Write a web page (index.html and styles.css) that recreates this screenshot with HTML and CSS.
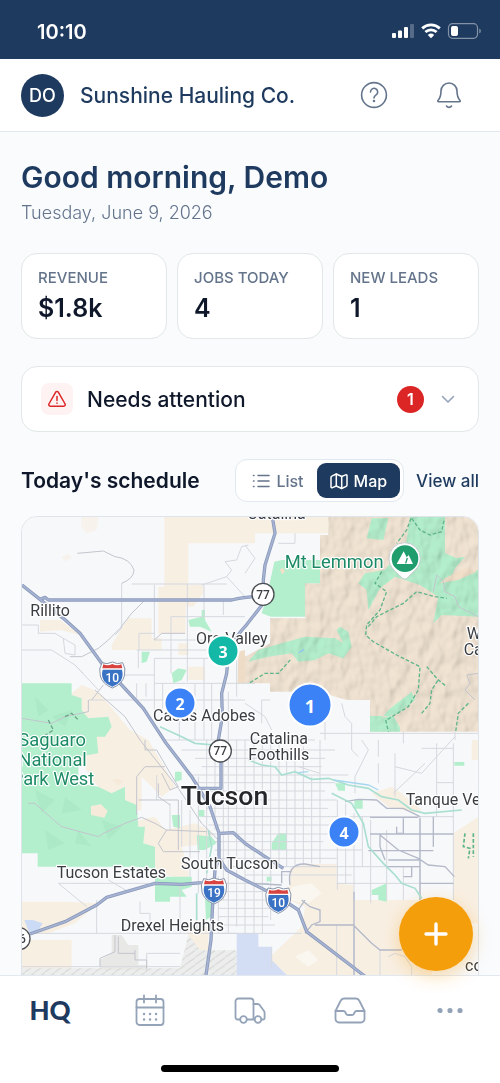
FILE: index.html
```html
<!DOCTYPE html>
<html lang="en">
<head>
    <meta charset="UTF-8">
    <meta name="viewport" content="width=device-width, initial-scale=1.0">
    <title>Sunshine Hauling Co.</title>
    <link rel="stylesheet" href="styles.css">
</head>
<body>
    <div class="status-bar">
        <span class="time">10:10</span>
        <svg class="status-icons" width="90" height="18" viewBox="0 0 90 18" aria-hidden="true">
            <g fill="#fff">
                <rect x="1" y="10" width="4" height="5" rx="1"/>
                <rect x="7" y="7.5" width="4" height="7.5" rx="1"/>
                <rect x="13" y="4" width="4" height="11" rx="1"/>
                <rect x="19" y="1" width="4" height="14" rx="1" opacity=".25"/>
                <rect x="60" y="3" width="7" height="10" rx="2"/>
            </g>
            <g fill="none" stroke="#fff" stroke-width="2.8">
                <path d="M31.2 5.4a13 13 0 0 1 17.6 0"/>
                <path d="M34.4 9a8.2 8.2 0 0 1 11.2 0"/>
            </g>
            <path d="M40 15.200l-3.200-3.300a4.700 4.700 0 0 1 6.400 0z" fill="#fff"/>
            <rect x="57.500" y=".7" width="29" height="14.600" rx="4" fill="none" stroke="#fff" stroke-opacity=".45" stroke-width="1.200"/>
            <path d="M88.300 5.500v5c2-.8 2-4.200 0-5z" fill="#fff" opacity=".45"/>
        </svg>
    </div>

    <header class="header">
        <div class="avatar">DO</div>
        <div class="company">Sunshine Hauling Co.</div>
        <button class="icon-btn" aria-label="Help">
            <svg width="28" height="28" viewBox="0 0 28 28">
                <circle cx="14" cy="14" r="12.400"/>
                <path d="M10.500 11a3.600 3.600 0 1 1 5.600 2.900c-1.400.9-2.100 1.500-2.100 3"/>
                <circle cx="14" cy="20" r=".5"/>
            </svg>
        </button>
        <button class="icon-btn" aria-label="Notifications">
            <svg width="28" height="28" viewBox="0 0 28 28">
                <path d="M3 19.500c2.400-2.800 3-5.600 3-9.500a8 8 0 0 1 16 0c0 3.900.6 6.700 3 9.500.5.700.2 1.200-.6 1.200H3.600c-.8 0-1.100-.5-.6-1.200z"/>
                <path d="M11.500 25c1.200 1.800 3.800 1.800 5 0"/>
            </svg>
        </button>
    </header>

    <main class="content">
        <h1>Good morning, Demo</h1>
        <p class="date">Tuesday, June 9, 2026</p>

        <div class="stats">
            <div class="card stat">
                <span class="stat-label">REVENUE</span>
                <span class="stat-value">$1.8k</span>
            </div>
            <div class="card stat">
                <span class="stat-label">JOBS TODAY</span>
                <span class="stat-value">4</span>
            </div>
            <div class="card stat">
                <span class="stat-label">NEW LEADS</span>
                <span class="stat-value">1</span>
            </div>
        </div>

        <button class="card attention">
            <span class="alert-icon">
                <svg width="20" height="20" viewBox="0 0 20 20">
                    <path d="M8.700 3.200L1.900 15a1.500 1.500 0 0 0 1.300 2.200h13.600a1.500 1.500 0 0 0 1.300-2.200L11.300 3.200a1.500 1.500 0 0 0-2.600 0z"/>
                    <path d="M10 7.500v4"/>
                    <path d="M10 14v.2"/>
                </svg>
            </span>
            <span class="attention-title">Needs attention</span>
            <span class="count">1</span>
            <svg class="chevron" width="16" height="16" viewBox="0 0 16 16">
                <path d="M2.500 5.500L8 11l5.500-5.500"/>
            </svg>
        </button>

        <div class="schedule-head">
            <h2>Today's schedule</h2>
            <div class="toggle">
                <button>
                    <svg width="18" height="18" viewBox="0 0 18 18">
                        <path d="M6 3.500h11M6 9h11M6 14.500h11"/>
                        <path d="M1.500 3.500h.5M1.500 9h.5M1.500 14.500h.5"/>
                    </svg>
                    List
                </button>
                <button class="active">
                    <svg width="18" height="18" viewBox="0 0 18 18">
                        <path d="M6.300 2L1.800 4.200c-.5.200-.8.600-.8 1.200v9.300c0 .8.700 1.200 1.400.9L6.300 14l5.400 2.500 4.500-2.200c.5-.2.800-.6.800-1.200V3.800c0-.8-.7-1.200-1.400-.9l-3.900 1.600z"/>
                        <path d="M6.300 2v12M11.700 4.500v12"/>
                    </svg>
                    Map
                </button>
            </div>
            <a class="view-all" href="#">View all</a>
        </div>

        <div class="map">
            <svg class="map-canvas" viewBox="21 21 1368 1560" preserveAspectRatio="xMidYMin slice">
                <defs>
                    <g id="interstate">
                        <path d="M-31-36Q-16-29 0-38Q16-29 31-36Q42-18 36 4Q30 28 0 40Q-30 28-36 4Q-42-18-31-36z" fill="#fff" stroke="#8793a8" stroke-width="3"/>
                        <path d="M-29-15H29Q34 3 25 19Q16 31 0 36Q-16 31-25 19Q-34 3-29-15z" fill="#3a72c4"/>
                        <path d="M-27-31Q-14-25 0-32Q14-25 27-31L30-19H-30z" fill="#d8433f"/>
                    </g>
                    <pattern id="hatch" width="30" height="22" patternUnits="userSpaceOnUse">
                        <path d="M0 22L30 2" stroke="#d9dad6" stroke-width="4"/>
                    </pattern>
                    <path id="range" d="M940 20H1400V665H1065V570H995L910 545H765V520H690V440L765 400V325H870V220H915V75H940z"/>
                    <clipPath id="range-clip">
                        <use href="#range"/>
                    </clipPath>
                    <filter id="relief" x="0" y="0" width="100%" height="100%">
                        <feTurbulence type="fractalNoise" baseFrequency="0.03 0.02" numOctaves="2" seed="7"/>
                        <feColorMatrix values="0 0 0 0 0  0 0 0 0 0  0 0 0 0 0  1 0 0 0 0"/>
                        <feDiffuseLighting surfaceScale="14" lighting-color="#fff">
                            <feDistantLight azimuth="225" elevation="50"/>
                        </feDiffuseLighting>
                    </filter>
                </defs>

                <rect x="0" y="0" width="1420" height="1620" fill="#f7f8fa"/>

                <!-- desert -->
                <g fill="#f8efe3">
                    <path d="M448 20H940V70H720V100H520V220L512 300V372H430V230H448z"/>
                    <path d="M200 20H250L245 60L215 70L198 50zM140 140l20-8 10 12-20 10z" opacity=".6"/>
                    <path d="M320 355L340 325H410V385H440V420H290V405z"/>
                    <path d="M490 400h30v35h-30zM520 470h50v40h-50zM75 330h60l60 45-60-15-60 5zM515 225h50v25l-30 40h-20z"/>
                    <path d="M170 550L200 525L250 545L345 660L400 690L430 740L480 830L440 860L380 800V900L330 910L240 820L190 740V690z"/>
                    <path d="M215 885H270V925H225zM330 940L420 920L450 960L540 940L590 965V1000L500 1010L520 1070V1110L430 1090L380 980z"/>
                    <path d="M21 1175H150L250 1180L180 1240L100 1270H21z"/>
                    <path d="M21 1290H170V1385H21zM520 1250h60v70h-60z"/>
                    <path d="M825 1075L870 1062H965V1120L1015 1125V1170H1250V1400H1390V1581H850L765 1500V1340L860 1250L870 1190L820 1170z"/>
                    <path d="M1315 970L1390 920V1240H1315zM1070 850l60-20 30 20 60 50-20 10-80-20z"/>
                    <path d="M1370 690h20v60h-20z"/>
                </g>
                <path d="M830 1130l60-10 30 30-40 30-60-10zM840 1340l40-20 30 30-30 20z" fill="#faf7f1"/>

                <!-- Catalina mountains -->
                <use href="#range" fill="#f1e4d3"/>
                <g fill="#b4efcd">
                    <path d="M778 155L800 150H915V220H870V320H768L740 310L755 260z"/>
                    <path d="M1070 25h50l-15 65-50-5zM1185 21H1290V130L1325 145L1350 140L1320 175L1305 210L1390 180V320L1280 315L1255 340L1270 260L1215 225L1140 200L1095 235L1060 300L1055 240L1030 220L1050 190L1110 180L1175 90z"/>
                    <path d="M700 455L730 420L800 400L870 380L960 385L985 400L965 360L975 350L1000 365L1010 410L985 445L940 430L900 450L850 455L830 430L760 440z"/>
                    <path d="M1190 545L1120 600L1100 625L1150 610L1200 570zM1065 618h70l20 35v12h-90z"/>
                    <path d="M21 520H170V555L200 565V600L220 625L280 620L290 650L270 680H245L250 730L190 740V820L250 830L290 850L330 830V870L365 885L370 950L390 950L385 1000L420 1010V1075L365 1070H68V1030H21z"/>
                    <path d="M520 330L560 320V300H570V330L590 365L555 350H525zM380 425h25l-10 30-15 5zM470 490l20-15 25 5-15 30-25 10z"/>
                    <path d="M420 1100H530V1130L500 1140L515 1160H465V1175H420zM545 975L590 980L605 1000L570 1020H548zM470 915h25v40l-20-5zM550 900h18v20h-18zM480 785h20v25l-20 5zM570 1160h18v60l-15 10z"/>
                    <path d="M770 1000l20-30h25v50h-45zM960 820h30v22h-20zM1018 868h25v28h-25zM1070 1140l45-20v55l-25-5v-15h-20zM1318 756h30v11h-30zM755 1100h15v14h-15z"/>
                </g>
                <path d="M228 888l30-5 20 20-10 20-40-8zM290 810l20-5 15 10-15 12z" fill="#f6eadb"/>
                <path d="M1290 205L1360 170L1385 185L1330 210L1275 220zM795 178l10-4 5 12-10 6z" fill="#f1dfca"/>
                <path d="M670 425L690 420V520H668z" fill="#efdcc7"/>

                <!-- relief -->
                <g class="relief" clip-path="url(#range-clip)">
                    <rect x="690" y="20" width="700" height="650" filter="url(#relief)"/>
                </g>
                <g fill="#7cc9a0" opacity=".14">
                    <path d="M60 560l40 40-30 20zM110 620l60-20-20 50zM60 840l60 30-40 40zM150 860l50 40-60 10zM260 930l60 20-40 40zM190 960l40 50-50-10zM90 960l60 40-50 20z"/>
                </g>
                <path d="M852 428l15-10" stroke="#8ec5f2" stroke-width="4"/>

                <!-- airfields and water -->
                <path d="M21 1375H495L520 1275L555 1320H665V1581H21z" fill="#eceded"/>
                <path d="M290 1275h30l20 30h30v60h25v15H255v-30l35-20z" fill="#e8e8e6"/>
                <path d="M21 1375H495L520 1275L555 1320H665V1581H21z" fill="url(#hatch)"/>
                <path d="M665 1270H730V1310H770V1350L815 1395V1581H665z" fill="#d3def5"/>
                <path d="M28 1230h25l30 10-15 25-25 5z" fill="#cbdaf5"/>

                <!-- streets -->
                <g fill="none" stroke="#d5d8de" stroke-width="3">
                    <path d="M320 220V355L300 375M350 222H635M418 225V390M517 222V515M372 420V370H418M468 320H600M468 320V490M418 390H620M365 420H665M418 445H620M420 520H720M220 570H690M370 420V475M315 495H420M365 520V565M393 520V560M418 445V600M443 520V595M567 445V690M590 520V690M540 520V690M493 570V690M470 570V620M640 545V690M665 420V560M567 225V320M625 270V315M600 320H690"/>
                    <path d="M21 345H70V370H120L145 385M21 420H110L180 465L205 490M145 385l35 20v30l-30-5zM180 465L250 540M560 225L635 200L650 180L630 155L665 150L680 110L700 105M635 200L690 260M690 105l30 40-30 45"/>
                    <path d="M445 690H900M500 720H960M540 745H930M560 770H920M520 795H1000M540 818H960M575 843H930M575 870H965M575 895H940M560 920H1315M580 945H965M580 972H940M600 995H925M600 1020H1040M620 1045H965M640 1070H1215M690 1095H1010M965 1120H1215M620 1120H760M610 1145H750M610 1170H750M610 1195H770M610 1220H760M610 1245H780M610 1270H860"/>
                    <path d="M500 870V1010M525 900V1100M550 800V1150M575 690V1130M600 690V960M625 690V1170M640 690V1270M665 690V1250M690 690V1270M717 690V1270M742 700V1270M767 700V1230M792 700V1070M815 730V1070M840 720V1065M865 710V1065M890 800V1060M915 690V1060M967 870V1140M992 880V1120M1017 910V1170M1042 920V1070M1067 930V1180M1115 960V1170M1140 730V860M1215 920V1170M1265 700V920M1315 700V1170M1165 1070V1170M1090 760V820"/>
                    <path d="M930 570V690M980 580L990 620L1010 640V720L1030 740M690 580l60 40 20 40M915 670H1390M1140 770L1220 790L1265 740L1320 680M1135 850L1230 760M1165 665V700M1320 665V690M765 570H740V640M1040 690L1060 720L1020 800V850M915 790L850 770M1090 690V740M1265 818H1315M790 100h50v-30M1220 715H1315"/>
                    <path d="M130 1120L215 1190M130 1120H400M245 1170V1270M21 1270H665M375 1175V1210H405V1250M495 1120V1270M21 1370H495M280 1110L340 1145M465 880V960M425 795V870M610 1100V1270M545 1195V1270M395 1380V1330H495M770 1310V1370M765 1400H870M965 1245V1400M1017 1250V1400M1095 1320V1400M1120 1340l20-10 30 10 20 30v30M1290 1350l40-50 30-10"/>
                </g>
                <g fill="none" stroke="#c2c5cd" stroke-width="3">
                    <path d="M187 130L265 123L300 140Q345 145 357 180Q357 205 320 220M385 275L350 310L315 355L280 390L250 415L200 440L165 440M470 270H520M418 390L440 370H510M230 570L265 525M220 570V605L150 620L110 640L21 625M240 540L330 620L375 690L490 835L560 940L610 990"/>
                    <path d="M40 880L60 880L110 925L140 950L250 980L265 970L330 940L380 922L420 940L455 960L575 965M365 915V800L390 770H450M430 820V860L465 885M455 960L430 1000L445 1025H555M370 870H490V1020M390 690V720H425L460 780L490 830L465 840L440 790"/>
                    <path d="M1255 245L1265 195L1285 215L1290 245L1320 260L1330 290L1370 310L1390 320M1390 490L1355 495L1365 520L1350 540L1380 570M255 1370V1345L300 1325V1275M360 1320V1350H395V1375M310 1280V1330H360"/>
                    <path d="M100 630l15 30-30 20M150 620l20-10 20 20" stroke="#6ba588" stroke-width="4" stroke-dasharray="12 6"/>
                </g>
                <g fill="none" stroke="#b3b9c9" stroke-width="4">
                    <path d="M990 875L1030 868L1085 870L1115 895H1165L1215 920M1065 922H1210M1215 925V1170M1165 925V970H1145V950M1065 972H1315M1095 970V1010L1110 1050M1095 975L1150 1020L1210 1045L1240 1065L1290 1070L1318 1100M1120 1050H1215M1115 1070H1215M1060 1022H1255M1255 920V1010M1190 1070V1100H1165"/>
                    <path d="M1017 1145V1400M860 1170L885 1190L915 1200V1235L890 1245L870 1270M900 1245H1015L1035 1265L1070 1300L1095 1320H1160M850 1200L870 1170M1215 1120H1315M825 1125Q815 1060 870 1062L915 1070M800 1120V1085H830M710 1120L800 1125"/>
                </g>
                <g fill="none" stroke="#a9dfd0" stroke-width="5">
                    <path d="M435 650L500 680L540 700L600 705M700 750L740 765L780 770L800 795L840 785L890 808L940 805L1000 825L1060 835L1100 860L1150 870L1190 900L1230 910L1340 900M950 850L1010 880L1045 940L1060 1010L1105 1060L1140 1095L1160 1120L1200 1135L1220 1165M580 960L590 1010L575 1090M545 1150V1230"/>
                    <path d="M955 810L1060 825L1090 840M850 788L880 785" stroke="#a7d7ee" stroke-width="4"/>
                </g>

                <!-- trails -->
                <g fill="none" stroke="#5fb58a" stroke-width="4" stroke-dasharray="11 6">
                    <path d="M1188 25L1175 60L1145 100M1190 25L1215 60L1245 75L1280 65L1288 25M1100 185L1080 220L1115 245L1095 300L1055 345L1052 375L1075 395L1145 435L1215 470L1210 540L1180 590L1115 630M1060 350L1085 320L1165 280L1205 245L1260 260L1295 265"/>
                    <path d="M1235 470L1270 510L1295 530M1268 512L1250 540L1245 580L1220 610M1112 630L1120 665M1360 580L1330 610L1322 665M705 518L750 490L790 490L830 445"/>
                    <path d="M1350 970l-5 40 20 5-5 30M1375 970v70" stroke-width="5"/>
                </g>

                <!-- highways -->
                <g fill="none" stroke="#8b9aba" stroke-width="10" stroke-linejoin="round">
                    <path d="M21 225L75 268L145 325L195 370L260 460L320 525L385 595L450 695L530 800L585 890L612 970V1045L635 1080L690 1110L790 1160L850 1200L875 1265L1045 1395L1140 1470"/>
                    <path d="M75 268L90 262L100 270H650Q680 262 735 258M772 20L780 70L750 165L745 210V280L690 350Q640 400 635 490L620 550L622 620L610 690L618 740V835H545M612 1045L600 1080L593 1180L588 1290L573 1395L560 1500M45 1272L150 1235L245 1185L275 1162L420 1120L500 1123L560 1118M615 970L655 968L690 1000L750 1040L805 1075"/>
                </g>
                <g fill="none" stroke="#a6b3d3" stroke-width="5" stroke-linejoin="round">
                    <path d="M21 225L75 268L145 325L195 370L260 460L320 525L385 595L450 695L530 800L585 890L612 970V1045L635 1080L690 1110L790 1160L850 1200L875 1265L1045 1395L1140 1470"/>
                    <path d="M75 268L90 262L100 270H650Q680 262 735 258M772 20L780 70L750 165L745 210V280L690 350Q640 400 635 490L620 550L622 620L610 690L618 740V835H545M612 1045L600 1080L593 1180L588 1290L573 1395L560 1500M45 1272L150 1235L245 1185L275 1162L420 1120L500 1123L560 1118M615 970L655 968L690 1000L750 1040L805 1075"/>
                </g>

                <!-- route shields -->
                <use href="#interstate" x="292" y="494"/>
                <use href="#interstate" x="597" y="1142"/>
                <use href="#interstate" x="790" y="1170"/>
                <g fill="#fff" stroke="#4b4e53" stroke-width="4">
                    <circle cx="744" cy="253" r="33"/>
                    <circle cx="616" cy="723" r="33"/>
                    <circle cx="12" cy="1286" r="33"/>
                </g>
                <g class="shield-text">
                    <text x="744" y="266">77</text>
                    <text x="616" y="736">77</text>
                    <text x="12" y="1299">86</text>
                </g>
                <g class="shield-text interstate-text">
                    <text x="292" y="515">10</text>
                    <text x="597" y="1162">19</text>
                    <text x="790" y="1190">10</text>
                </g>

                <!-- places -->
                <g class="place">
                    <text x="697" y="26">Catalina</text>
                    <text x="46" y="318">Rillito</text>
                    <text x="543" y="402">Oro Valley</text>
                    <text x="414" y="634">Casas Adobes</text>
                    <text x="704" y="701">Catalina</text>
                    <text x="700" y="749">Foothills</text>
                    <text x="1172" y="884">Tanque Verde</text>
                    <text x="125" y="1103">Tucson Estates</text>
                    <text x="498" y="1077">South Tucson</text>
                    <text x="317" y="1262">Drexel Heights</text>
                    <text x="1355" y="388">Willow</text>
                    <text x="1346" y="436">Canyon</text>
                    <text x="1350" y="1384">corona</text>
                    <text class="city" x="497" y="885">Tucson</text>
                </g>
                <g class="place park">
                    <text x="10" y="709">Saguaro</text>
                    <text x="10" y="769">National</text>
                    <text x="-10" y="825">Park West</text>
                    <text x="809" y="173">Mt Lemmon</text>
                </g>

                <!-- Mt Lemmon marker -->
                <path d="M1169 98a47 47 0 0 1 47 47c0 30-24 40-36 56q-11 12-22 0c-12-16-36-26-36-56a47 47 0 0 1 47-47z" fill="#fff" stroke="#c9cdd0" stroke-width="3"/>
                <circle cx="1170" cy="146" r="40" fill="#1f9d6d"/>
                <path d="M1145 162L1166 124L1175 142L1181 135L1194 162z" fill="#fff"/>
                <path d="M1172 160L1177 144" stroke="#1f9d6d" stroke-width="4"/>
            </svg>

            <button class="pin pin-3">3</button>
            <button class="pin pin-2">2</button>
            <button class="pin pin-1 selected">1</button>
            <button class="pin pin-4">4</button>
        </div>
    </main>

    <div class="bottom">
        <button class="fab" aria-label="Add">
            <svg width="24" height="24" viewBox="0 0 24 24">
                <path d="M12 2v20M2 12h20"/>
            </svg>
        </button>
        <nav class="tabs">
            <a class="logo" href="#">HQ</a>
            <a href="#" aria-label="Calendar">
                <svg width="32" height="32" viewBox="0 0 32 32">
                    <rect x="2.500" y="5" width="27" height="26" rx="3"/>
                    <path d="M2.500 13.500h27M10 1.500v7M22 1.500v7"/>
                    <path class="dots" d="M10 20h.1M16 20h.1M22 20h.1M10 25.500h.1M16 25.500h.1M22 25.500h.1"/>
                </svg>
            </a>
            <a href="#" aria-label="Jobs">
                <svg width="32" height="32" viewBox="0 0 32 32">
                    <path d="M6 25.500H3.500a2 2 0 0 1-2-2V7.500a3 3 0 0 1 3-3h12a3 3 0 0 1 3 3v18H13"/>
                    <path d="M19.500 10h4a3 3 0 0 1 2.500 1.400l4 5.600c.4.700.6 1.200.6 2v5a1.500 1.500 0 0 1-1.500 1.500h-1.300"/>
                    <circle cx="9.500" cy="25.500" r="3.300"/>
                    <circle cx="24" cy="25.500" r="3.300"/>
                </svg>
            </a>
            <a href="#" aria-label="Inbox">
                <svg width="32" height="32" viewBox="0 0 32 32">
                    <path d="M1.500 17L6.800 6.500a3.500 3.500 0 0 1 3.100-2h12.200a3.500 3.500 0 0 1 3.100 2L30.500 17v8a3.500 3.500 0 0 1-3.500 3.500H5A3.500 3.500 0 0 1 1.500 25z"/>
                    <path d="M1.500 17h8a2 2 0 0 1 1.700 1l1 2a2 2 0 0 0 1.700 1h4.200a2 2 0 0 0 1.700-1l1-2a2 2 0 0 1 1.700-1h8"/>
                </svg>
            </a>
            <a href="#" aria-label="More">
                <svg width="32" height="32" viewBox="0 0 32 32">
                    <g class="more">
                        <circle cx="6" cy="16.500" r="1.700"/>
                        <circle cx="16" cy="16.500" r="1.700"/>
                        <circle cx="26" cy="16.500" r="1.700"/>
                    </g>
                </svg>
            </a>
        </nav>
        <div class="home-indicator"></div>
    </div>
</body>
</html>
```
FILE: styles.css
```css
* {
    box-sizing: border-box;
    margin: 0;
    padding: 0;
}

body {
    display: flex;
    flex-direction: column;
    height: 100vh;
    background: #f9fbfd;
    color: #0f172a;
    font-family: Inter, "Liberation Sans", sans-serif;
}

button {
    border: none;
    background: none;
    font-family: inherit;
    color: inherit;
    cursor: pointer;
}

a {
    color: inherit;
    text-decoration: none;
}

svg {
    display: block;
    flex-shrink: 0;
}

/* status bar */
.status-bar {
    display: flex;
    flex-shrink: 0;
    justify-content: space-between;
    align-items: center;
    height: 59px;
    padding: 4px 19px 0 37px;
    background: #1e3a5f;
    color: #fff;
}

.time {
    font-size: 20px;
    font-weight: 600;
}

/* header */
.header {
    display: flex;
    flex-shrink: 0;
    align-items: center;
    height: 73px;
    padding: 0 37px 0 21px;
    background: #fff;
    border-bottom: 1px solid #e2e8f0;
}

.avatar {
    width: 43px;
    height: 43px;
    margin-right: 16px;
    border-radius: 50%;
    background: #1e3a5f;
    color: #fff;
    font-size: 18px;
    font-weight: 500;
    line-height: 43px;
    text-align: center;
}

.company {
    flex: 1;
    color: #1e3a5f;
    font-size: 21px;
    font-weight: 500;
}

.icon-btn + .icon-btn {
    margin-left: 47px;
}

.icon-btn svg,
.chevron {
    fill: none;
    stroke: #64748b;
    stroke-width: 1.6;
    stroke-linecap: round;
    stroke-linejoin: round;
}

/* main content */
.content {
    flex: 1;
    min-height: 0;
    overflow: hidden;
    padding: 24px 21px 0;
}

h1 {
    color: #1e3a5f;
    font-size: 30px;
    font-weight: 600;
    line-height: 42px;
}

.date {
    color: #64748b;
    font-size: 18px;
    font-weight: 300;
    line-height: 30px;
}

.card {
    background: #fff;
    border: 1px solid #e2e8e8;
    border-radius: 16px;
}

.stats {
    display: grid;
    grid-template-columns: repeat(3, 1fr);
    gap: 10px;
    margin-top: 25px;
}

.stat {
    display: flex;
    flex-direction: column;
    height: 86px;
    padding: 14px 16px;
}

.stat-label {
    color: #64748b;
    font-size: 15px;
    font-weight: 500;
    line-height: 20px;
    white-space: nowrap;
}

.stat-value {
    font-size: 25px;
    font-weight: 600;
    line-height: 40px;
}

.attention {
    display: flex;
    align-items: center;
    width: 100%;
    height: 66px;
    margin-top: 27px;
    padding: 0 22px 0 19px;
}

.alert-icon {
    padding: 6px;
    margin-right: 14px;
    border-radius: 8px;
    background: #fef2f2;
}

.alert-icon svg {
    fill: none;
    stroke: #dc2626;
    stroke-width: 1.5;
    stroke-linecap: round;
    stroke-linejoin: round;
}

.attention-title {
    flex: 1;
    font-size: 21px;
    font-weight: 500;
    text-align: left;
}

.count {
    width: 27px;
    height: 27px;
    margin-right: 16px;
    border-radius: 50%;
    background: #dc2626;
    color: #fff;
    font-size: 16px;
    font-weight: 600;
    line-height: 27px;
    text-align: center;
}

.chevron {
    stroke: #94a3b8;
}

/* schedule */
.schedule-head {
    display: flex;
    align-items: center;
    margin: 27px 0 14px;
    white-space: nowrap;
}

h2 {
    flex: 1;
    font-size: 21px;
    font-weight: 600;
}

.toggle {
    display: flex;
    margin-right: 12px;
    padding: 3px;
    background: #fff;
    border: 1px solid #e2e8f0;
    border-radius: 12px;
}

.toggle button {
    display: flex;
    align-items: center;
    gap: 6px;
    height: 35px;
    padding: 0 13px;
    border-radius: 9px;
    color: #64748b;
    font-size: 16px;
    font-weight: 500;
}

.toggle svg {
    fill: none;
    stroke: currentColor;
    stroke-width: 1.5;
    stroke-linecap: round;
    stroke-linejoin: round;
}

.toggle .active {
    background: #1e3a5f;
    color: #fff;
}

.view-all {
    color: #1e3a5f;
    font-size: 17px;
    font-weight: 500;
}

/* map */
.map {
    position: relative;
    height: 522px;
    overflow: hidden;
    border: 1px solid #dfe4ea;
    border-radius: 16px;
}

.map-canvas {
    width: 100%;
    height: 100%;
}

.relief {
    mix-blend-mode: multiply;
    opacity: 0.22;
}

.place text {
    fill: #3a3d42;
    stroke: #fff;
    stroke-width: 7px;
    stroke-linejoin: round;
    paint-order: stroke;
    font-family: Roboto, sans-serif;
    font-size: 48px;
}

.place .city {
    fill: #25272b;
    font-size: 80px;
    font-weight: 500;
}

.park text {
    fill: #1d8a66;
    font-size: 55px;
}

.shield-text text {
    fill: #3a3d42;
    font-family: Roboto, sans-serif;
    font-size: 36px;
    font-weight: 500;
    text-anchor: middle;
}

.interstate-text text {
    fill: #fff;
}

.pin {
    position: absolute;
    width: 33px;
    height: 33px;
    border: 2px solid #fff;
    border-radius: 50%;
    background: #3b82f6;
    color: #fff;
    font-family: "Open Sans", sans-serif;
    font-size: 16px;
    font-weight: 700;
    transform: translate(-50%, -50%);
}

.selected {
    width: 45px;
    height: 45px;
    font-size: 18px;
}

.pin-1 {
    left: 288px;
    top: 188px;
}

.pin-2 {
    left: 158px;
    top: 186px;
}

.pin-3 {
    left: 201px;
    top: 134px;
    background: #14b8a6;
}

.pin-4 {
    left: 322px;
    top: 315px;
}

/* bottom navigation */
.bottom {
    position: relative;
    flex-shrink: 0;
    background: #fff;
    border-top: 1px solid #e2e8f0;
}

.fab {
    position: absolute;
    right: 27px;
    bottom: calc(100% + 5px);
    display: flex;
    justify-content: center;
    align-items: center;
    width: 74px;
    height: 74px;
    border-radius: 50%;
    background: #f59e0b;
    box-shadow: 0 5px 18px rgba(245, 158, 11, 0.35);
}

.fab svg {
    stroke: #fff;
    stroke-width: 3.4;
    stroke-linecap: round;
}

.tabs {
    display: grid;
    grid-template-columns: repeat(5, 1fr);
    height: 67px;
}

.tabs a {
    display: flex;
    justify-content: center;
    align-items: center;
}

.tabs svg {
    fill: none;
    stroke: #94a3b8;
    stroke-width: 1.8;
    stroke-linecap: round;
    stroke-linejoin: round;
}

.tabs .dots {
    stroke-width: 2.4;
}

.tabs .more {
    fill: #94a3b8;
}

.tabs .logo {
    color: #1e3a5f;
    font-family: Lato, sans-serif;
    font-size: 26px;
    font-weight: 900;
}

.home-indicator {
    width: 178px;
    height: 7px;
    margin: 22px auto 11px;
    border-radius: 4px;
    background: #000;
}
```
